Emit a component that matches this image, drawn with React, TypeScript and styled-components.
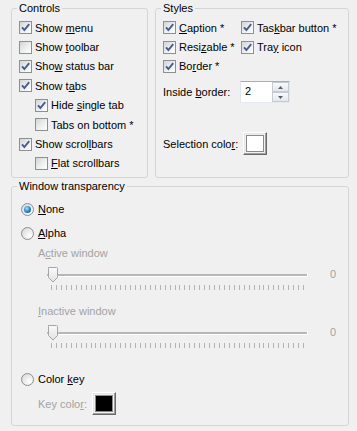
import React from 'react';
import styled, { createGlobalStyle } from 'styled-components';

const GlobalStyle = createGlobalStyle`
  html, body {
    margin: 0;
    padding: 0;
    background: #f0f0f0;
  }
  body {
    font-family: "Liberation Sans", Arial, sans-serif;
    font-size: 11px;
    color: #000;
  }
`;

const Page = styled.div`
  width: 357px;
  height: 431px;
  box-sizing: border-box;
  padding: 1px 8px 0 11px;
  display: flex;
  flex-direction: column;
  gap: 1px;
`;

const TopRow = styled.div`
  display: flex;
  gap: 7px;
`;

const Group = styled.fieldset<{ $width?: number; $pad?: string }>`
  margin: 0;
  padding: ${({ $pad }) => $pad || '3px 6px 4px 7px'};
  border: 1px solid #d5d5d5;
  border-radius: 3px;
  min-width: 0;
  box-sizing: border-box;
  width: ${({ $width }) => ($width ? `${$width}px` : 'auto')};
  flex: none;
`;

const Legend = styled.legend<{ $shift?: number }>`
  padding: 0 2px;
  margin-left: ${({ $shift }) => $shift ?? -2}px;
  line-height: 14px;
  font-size: 11px;
`;

const Key = styled.span`
  text-decoration: underline;
  text-underline-offset: 1px;
`;

const CheckRow = styled.div<{ $indent?: boolean }>`
  display: flex;
  align-items: center;
  gap: 3px;
  height: 19.4px;
  padding-left: ${({ $indent }) => ($indent ? 16 : 0)}px;
  white-space: nowrap;
`;

const Box = styled.span`
  width: 13px;
  height: 13px;
  box-sizing: border-box;
  border: 1px solid #8e8f8f;
  background: linear-gradient(135deg, #d2d4d7 0%, #eeeff0 55%, #ffffff 100%);
  display: flex;
  align-items: center;
  justify-content: center;
  flex: none;
`;

const StyleGrid = styled.div`
  display: grid;
  grid-template-columns: 78px auto;
`;

const FieldRow = styled.div<{ $top: number }>`
  display: flex;
  align-items: center;
  margin-top: ${({ $top }) => $top}px;
`;

const FieldLabel = styled.span<{ $width?: number; $disabled?: boolean }>`
  width: ${({ $width }) => ($width ? `${$width}px` : 'auto')};
  margin-right: ${({ $width }) => ($width ? 0 : 5)}px;
  color: ${({ $disabled }) => ($disabled ? '#a3a3a3' : '#000')};
  white-space: nowrap;
`;

const Spin = styled.div`
  display: flex;
  width: 50px;
  height: 22px;
  box-sizing: border-box;
  border: 1px solid;
  border-color: #abadb3 #e3e9ef #e3e9ef #e2e3ea;
  background: #fff;
`;

const SpinValue = styled.span`
  flex: 1;
  padding-left: 4px;
  line-height: 19px;
`;

const SpinButtons = styled.div`
  width: 17px;
  display: flex;
  flex-direction: column;
`;

const SpinButton = styled.span`
  flex: 1;
  box-sizing: border-box;
  border: 1px solid #c5cbd3;
  background: linear-gradient(#f8f9fa, #e4e7eb);
  display: flex;
  align-items: center;
  justify-content: center;
`;

const ColorButton = styled.span`
  width: 24px;
  height: 23px;
  box-sizing: border-box;
  padding: 2px;
  border: 1px solid;
  border-color: #ffffff #696969 #696969 #ffffff;
  box-shadow: inset -1px -1px 0 #a0a0a0, inset 1px 1px 0 #e3e3e3;
  background: #f0f0f0;
  display: flex;
  flex: none;
`;

const Swatch = styled.span<{ $color: string }>`
  flex: 1;
  border: 1px solid #8a8a8a;
  background: ${({ $color }) => $color};
`;

const RadioRow = styled.div`
  display: flex;
  align-items: center;
  gap: 4px;
  height: 24px;
`;

const RadioCircle = styled.span<{ $on: boolean }>`
  width: 13px;
  height: 13px;
  border-radius: 50%;
  box-sizing: border-box;
  border: 1px solid #8e8f8f;
  background: radial-gradient(circle at 70% 70%, #ffffff 0%, #ececec 45%, #cfd0d2 100%);
  display: flex;
  align-items: center;
  justify-content: center;
  flex: none;

  &::after {
    content: '';
    display: ${({ $on }) => ($on ? 'block' : 'none')};
    width: 7px;
    height: 7px;
    border-radius: 50%;
    background: radial-gradient(circle at 40% 35%, #a8e4ff 0%, #2f8fd8 45%, #123f78 100%);
  }
`;

const Indented = styled.div`
  padding-left: 17px;
`;

const SubLabel = styled.div<{ $top?: number }>`
  height: 16px;
  line-height: 16px;
  margin-top: ${({ $top }) => $top ?? 0}px;
  color: #a3a3a3;
`;

const TrackRow = styled.div`
  display: flex;
  height: 30px;
  padding-left: 7px;
`;

const TrackValue = styled.span`
  margin-left: 19px;
  margin-top: 6px;
  line-height: 14px;
  color: #a3a3a3;
`;

const CheckMark = () => (
  <svg width="11" height="11" viewBox="0 0 11 11">
    <path d="M2 5.3 L4.4 8 L9.2 2.2" fill="none" stroke="#4a5b8c" strokeWidth="1.9" />
  </svg>
);

const CheckBox = ({ checked, indent, children }: { checked: boolean; indent?: boolean; children: React.ReactNode }) => (
  <CheckRow $indent={indent}>
    <Box>{checked && <CheckMark />}</Box>
    <span>{children}</span>
  </CheckRow>
);

const Radio = ({ on, children }: { on: boolean; children: React.ReactNode }) => (
  <RadioRow>
    <RadioCircle $on={on} />
    <span>{children}</span>
  </RadioRow>
);

const Arrow = ({ up }: { up?: boolean }) => (
  <svg width="5" height="3" viewBox="0 0 5 3">
    <path d={up ? 'M0 3 L2.5 0 L5 3 Z' : 'M0 0 L5 0 L2.5 3 Z'} fill="#59606b" />
  </svg>
);

const ticks = Array.from({ length: 52 }, (_, i) => Math.round(6 + (i * 252) / 51) + 0.5);

const Trackbar = () => (
  <TrackRow>
    <svg width="266" height="30" viewBox="0 0 266 30">
      <defs>
        <linearGradient id="thumb" x1="0" y1="0" x2="0" y2="1">
          <stop offset="0" stopColor="#fafafa" />
          <stop offset="1" stopColor="#e2e2e2" />
        </linearGradient>
      </defs>
      <rect x="2" y="13" width="260" height="2" fill="#b7b7b7" />
      <rect x="2" y="15" width="261" height="1" fill="#ffffff" />
      <rect x="262" y="12" width="1" height="4" fill="#ffffff" />
      {ticks.map((x) => (
        <line key={x} x1={x} y1="24" x2={x} y2="29" stroke="#b3b3b3" strokeWidth="1" />
      ))}
      <path d="M3.5 6.5 H11.5 Q12.5 6.5 12.5 7.5 V16.5 L8 21 L3.5 16.5 V7.5 Q3.5 6.5 4.5 6.5 Z" fill="url(#thumb)" stroke="#a5a5a5" />
    </svg>
    <TrackValue>0</TrackValue>
  </TrackRow>
);

export default function App() {
  return (
    <>
      <GlobalStyle />
      <Page>
        <TopRow>
          <Group $width={137}>
            <Legend>Controls</Legend>
            <CheckBox checked>Show <Key>m</Key>enu</CheckBox>
            <CheckBox checked={false}>Show <Key>t</Key>oolbar</CheckBox>
            <CheckBox checked>Sho<Key>w</Key> status bar</CheckBox>
            <CheckBox checked>Show t<Key>a</Key>bs</CheckBox>
            <CheckBox checked indent>Hide <Key>s</Key>ingle tab</CheckBox>
            <CheckBox checked={false} indent>Tabs on bottom *</CheckBox>
            <CheckBox checked>Show scrol<Key>l</Key>bars</CheckBox>
            <CheckBox checked={false} indent><Key>F</Key>lat scrollbars</CheckBox>
          </Group>
          <Group $width={194}>
            <Legend>Styles</Legend>
            <StyleGrid>
              <CheckBox checked><Key>C</Key>aption *</CheckBox>
              <CheckBox checked>Tas<Key>k</Key>bar button *</CheckBox>
              <CheckBox checked>Resi<Key>z</Key>able *</CheckBox>
              <CheckBox checked>Tra<Key>y</Key> icon</CheckBox>
              <CheckBox checked>Bo<Key>r</Key>der *</CheckBox>
            </StyleGrid>
            <FieldRow $top={5}>
              <FieldLabel $width={77}>Inside <Key>b</Key>order:</FieldLabel>
              <Spin>
                <SpinValue>2</SpinValue>
                <SpinButtons>
                  <SpinButton><Arrow up /></SpinButton>
                  <SpinButton><Arrow /></SpinButton>
                </SpinButtons>
              </Spin>
            </FieldRow>
            <FieldRow $top={29}>
              <FieldLabel>Selection colo<Key>r</Key>:</FieldLabel>
              <ColorButton><Swatch $color="#ffffff" /></ColorButton>
            </FieldRow>
          </Group>
        </TopRow>
        <Group $width={338} $pad="4px 6px 10px 9px">
          <Legend $shift={-4}>Window transparency</Legend>
          <Radio on><Key>N</Key>one</Radio>
          <Radio on={false}><Key>A</Key>lpha</Radio>
          <Indented>
            <SubLabel>A<Key>c</Key>tive window</SubLabel>
            <Trackbar />
            <SubLabel $top={12}><Key>I</Key>nactive window</SubLabel>
            <Trackbar />
          </Indented>
          <FieldRow $top={18}>
            <Radio on={false}>Color <Key>k</Key>ey</Radio>
          </FieldRow>
          <Indented>
            <FieldRow $top={1}>
              <FieldLabel $disabled>Key colo<Key>r</Key>:</FieldLabel>
              <ColorButton><Swatch $color="#000000" /></ColorButton>
            </FieldRow>
          </Indented>
        </Group>
      </Page>
    </>
  );
}
